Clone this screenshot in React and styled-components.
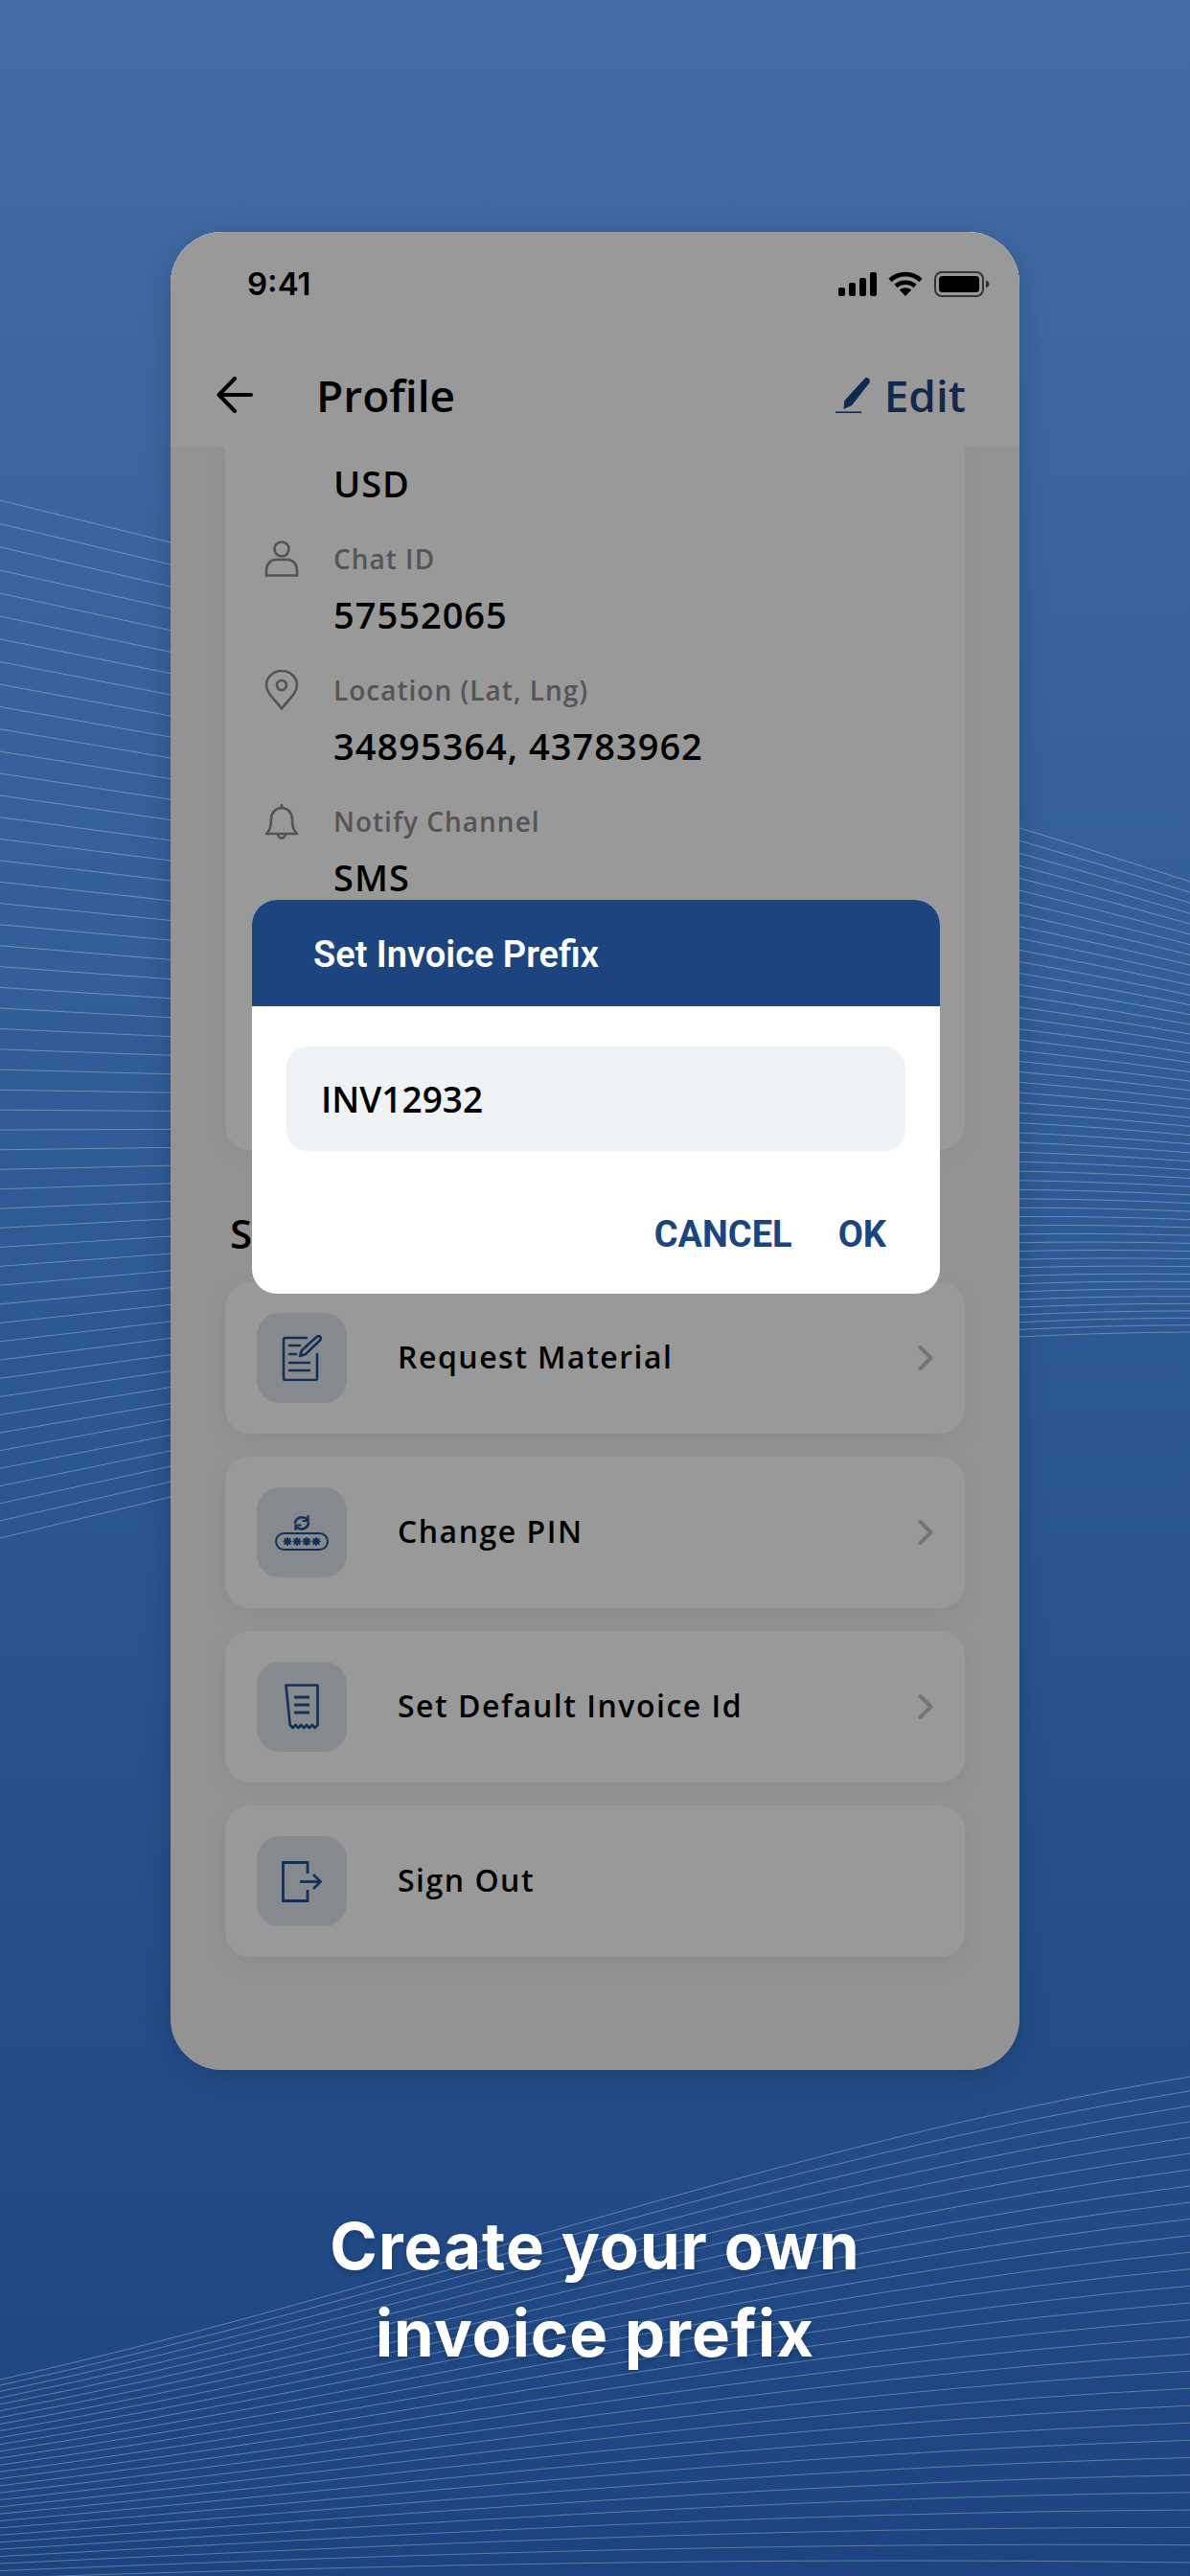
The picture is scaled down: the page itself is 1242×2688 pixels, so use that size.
import React from "react";
import styled, { createGlobalStyle } from "styled-components";

const NAVY = "#1c4580";
const ICON_BLUE = "#24508f";

const GlobalStyle = createGlobalStyle`
  html, body {
    margin: 0;
    padding: 0;
    background: #1e4680;
  }
  * {
    box-sizing: border-box;
  }
`;

// background line bands, each line is interpolated between the edges of its band
const lerp = (a, b, t) => a + (b - a) * t;

const bowed = (top, bottom, bow, t) => lerp(top, bottom, t) + bow * 4 * t * (1 - t);

const backLines = Array.from({ length: 52 }, (_, i) => {
  const t = i / 51;
  const a = bowed(522, 1605, 42, t);
  const b = bowed(566, 1562, 47, t);
  const c = bowed(864, 1395, 37, t);
  const d = bowed(920, 1390, 25, t);
  return `M0 ${a} L178 ${b} L1064 ${c} Q1150 ${lerp(c, d, 0.5) - 2} 1242 ${d}`;
});

const footLines = Array.from({ length: 30 }, (_, i) => {
  const t = i / 29;
  const e = Math.pow(t, 1.05);
  return `M0 ${lerp(2483, 2690, e)} C420 ${lerp(2390, 2676, e)} 800 ${lerp(2240, 2668, e)} 1242 ${lerp(2167, 2674, e)}`;
});

const Waves = () => (
  <WaveLayer viewBox="0 0 1242 2688" fill="none" stroke="#fff" strokeWidth="1" strokeOpacity="0.3">
    {backLines.map((d) => (
      <path key={d} d={d} />
    ))}
    {footLines.map((d) => (
      <path key={d} d={d} />
    ))}
  </WaveLayer>
);

const CellIcon = () => (
  <svg width="40" height="25" viewBox="0 0 40 25" fill="#000">
    <rect x="0" y="16" width="7" height="9" rx="2" />
    <rect x="11" y="11" width="7" height="14" rx="2" />
    <rect x="22" y="6" width="7" height="19" rx="2" />
    <rect x="33" y="0" width="7" height="25" rx="2" />
  </svg>
);

const WifiIcon = () => (
  <svg width="36" height="26" viewBox="0 0 36 26" fill="none" stroke="#000" strokeWidth="4.600">
    <path d="M2 9.500C11 1 25 1 34 9.500" />
    <path d="M8 15.500C13.500 10.500 22.500 10.500 28 15.500" />
    <path d="M18 26l-6.200-6.400c3.400-3 9-3 12.400 0z" fill="#000" stroke="none" />
  </svg>
);

const BatteryIcon = () => (
  <svg width="58" height="27" viewBox="0 0 58 27">
    <rect x="1" y="1" width="50" height="25" rx="7" fill="none" stroke="#555" strokeWidth="2" />
    <rect x="5" y="5" width="42" height="17" rx="3.500" fill="#000" />
    <path d="M54 9.500c2.200.8 3.500 2.200 3.500 4s-1.300 3.200-3.500 4z" fill="#555" />
  </svg>
);

const BackArrow = () => (
  <svg width="38" height="38" viewBox="0 0 38 38" fill="none" stroke="#000" strokeWidth="4" strokeLinecap="round" strokeLinejoin="round">
    <path d="M36 19H3" />
    <path d="M19 2L2.500 19L19 36" />
  </svg>
);

const PenIcon = () => (
  <svg width="37" height="38" viewBox="0 0 37 38">
    <path d="M31 1.500c1.500-1 3.500 0 4.500 1.500.7 1.300.5 2.500-.2 3.700L17 30l-8.500 4 .8-9z" fill={NAVY} />
    <path d="M0 37.200h27" stroke={NAVY} strokeWidth="1.600" />
  </svg>
);

const PersonIcon = () => (
  <svg width="36" height="38" viewBox="0 0 36 38" fill="none" stroke="#8a8a8a" strokeWidth="2.600">
    <circle cx="18" cy="9" r="7.500" />
    <path d="M2 36.500V31c0-7 5-11 10-11h12c5 0 10 4 10 11v5.500z" />
  </svg>
);

const PinIcon = () => (
  <svg width="36" height="42" viewBox="0 0 36 42" fill="none" stroke="#8a8a8a" strokeWidth="2.600">
    <path d="M18 40.500C10 30 2 24 2 16a16 15 0 0 1 32 0c0 8-8 14-16 24.500z" />
    <circle cx="18" cy="16" r="5" />
  </svg>
);

const BellIcon = () => (
  <svg width="36" height="38" viewBox="0 0 36 38" fill="none" stroke="#8a8a8a" strokeWidth="2.600" strokeLinejoin="round">
    <path d="M18 1v4" />
    <path d="M2 32c3-3 5-6 5-15 0-7 5-12 11-12s11 5 11 12c0 9 2 12 5 15z" />
    <path d="M14 32c0 6 8 6 8 0" />
  </svg>
);

const RequestIcon = () => (
  <svg width="42" height="48" viewBox="0 0 42 48" fill="none" stroke={ICON_BLUE} strokeWidth="2.600" strokeLinecap="round" strokeLinejoin="round">
    <path d="M26 3H4a2 2 0 0 0-2 2v40a2 2 0 0 0 2 2h31a2 2 0 0 0 2-2V20" />
    <path d="M8 11h11M8 20h7M8 29h21M8 37h21" />
    <path d="M39 1l2 2-.5 2L25 20l-6 2 2-6L37 1.500z" />
  </svg>
);

const PinChangeIcon = () => (
  <svg width="56" height="37" viewBox="0 0 56 37" fill="none" stroke={ICON_BLUE} strokeWidth="2" strokeLinecap="round" strokeLinejoin="round">
    <rect x="1" y="19" width="54" height="17" rx="8.500" />
    {[13, 23, 33, 43].map((x) => (
      <path key={x} d={`M${x - 3.500} 27.500h7M${x} 24v7M${x - 2.600} 25l5.200 5M${x + 2.600} 25l-5.200 5`} />
    ))}
    <path d="M21 8a7.500 7.500 0 0 1 13-3" strokeWidth="2.600" />
    <path d="M35 8a7.500 7.500 0 0 1-13 4" strokeWidth="2.600" />
    <path d="M34.500 1v5h-5M21.500 15v-4.500h5" strokeWidth="2.200" />
  </svg>
);

const ReceiptIcon = () => (
  <svg width="36" height="48" viewBox="0 0 36 48" fill="none" stroke={ICON_BLUE} strokeWidth="2.600" strokeLinejoin="round">
    <path d="M1.500 1.500h33v41.500l-2.800 3-2.900-3-2.900 3-2.900-3-2.900 3-2.900-3-2.900 3-2.900-3-2.900 3-2.800-3z" />
    <path d="M10 14h16M10 22h16M10 30h16" strokeWidth="3" />
  </svg>
);

const SignOutIcon = () => (
  <svg width="42" height="43" viewBox="0 0 42 43" fill="none" stroke={ICON_BLUE} strokeWidth="2.800">
    <path d="M27 13V1.500H1.500v40H27V30" />
    <path d="M19 21.500h21" />
    <path d="M33 14l7.500 7.500L33 29" />
  </svg>
);

const Chevron = () => (
  <svg width="16" height="26" viewBox="0 0 16 26" fill="none" stroke="#c4c4c4" strokeWidth="4" strokeLinecap="round" strokeLinejoin="round">
    <path d="M2.500 2L13.500 13L2.500 24" />
  </svg>
);

const details = [
  { id: "chat", icon: <PersonIcon />, label: "Chat ID", value: "57552065" },
  { id: "location", icon: <PinIcon />, label: "Location (Lat, Lng)", value: "34895364, 43783962" },
  { id: "notify", icon: <BellIcon />, label: "Notify Channel", value: "SMS" },
];

const menu = [
  { id: "material", icon: <RequestIcon />, label: "Request Material", arrow: true },
  { id: "pin", icon: <PinChangeIcon />, label: "Change PIN", arrow: true },
  { id: "invoice", icon: <ReceiptIcon />, label: "Set Default Invoice Id", arrow: true },
  { id: "signout", icon: <SignOutIcon />, label: "Sign Out", arrow: false },
];

export default function App() {
  return (
    <>
      <GlobalStyle />
      <Page>
        <Waves />
        <Phone>
          <StatusBar>
            <Clock>9:41</Clock>
            <StatusIcons>
              <CellIcon />
              <WifiIcon />
              <BatteryIcon />
            </StatusIcons>
          </StatusBar>
          <Header>
            <HeaderLeft>
              <BackArrow />
              <Title>Profile</Title>
            </HeaderLeft>
            <EditLink>
              <PenIcon />
              Edit
            </EditLink>
          </Header>
          <Content>
            <DetailsCard>
              <LoneValue>USD</LoneValue>
              {details.map((row) => (
                <DetailRow key={row.id}>
                  <DetailIcon>{row.icon}</DetailIcon>
                  <DetailLabel>{row.label}</DetailLabel>
                  <DetailValue>{row.value}</DetailValue>
                </DetailRow>
              ))}
            </DetailsCard>
            <SectionTitle>Settings</SectionTitle>
            <MenuList>
              {menu.map((item) => (
                <MenuItem key={item.id}>
                  <MenuIcon>{item.icon}</MenuIcon>
                  <MenuLabel>{item.label}</MenuLabel>
                  {item.arrow && <Chevron />}
                </MenuItem>
              ))}
            </MenuList>
          </Content>
          <Scrim>
            <Dialog>
              <DialogHead>Set Invoice Prefix</DialogHead>
              <DialogBody>
                <PrefixField>INV12932</PrefixField>
                <DialogActions>
                  <DialogButton>CANCEL</DialogButton>
                  <DialogButton>OK</DialogButton>
                </DialogActions>
              </DialogBody>
            </Dialog>
          </Scrim>
        </Phone>
        <Caption>
          Create your own
          <br />
          invoice prefix
        </Caption>
      </Page>
    </>
  );
}

const Page = styled.div`
  position: relative;
  width: 1242px;
  height: 2688px;
  overflow: hidden;
  display: flex;
  flex-direction: column;
  align-items: center;
  padding-top: 242px;
  background: linear-gradient(180deg, #426ca6 0%, #2d5994 50%, #1c4480 100%);
`;

const WaveLayer = styled.svg`
  position: absolute;
  top: 0;
  left: 0;
  width: 1242px;
  height: 2688px;
`;

const Phone = styled.div`
  position: relative;
  width: 886px;
  height: 1918px;
  flex: none;
  overflow: hidden;
  border-radius: 54px;
  background: #f5f5f5;
  box-shadow: 0 6px 30px rgba(0, 0, 0, 0.18);
  font-family: "Open Sans", sans-serif;
  color: #000;
`;

const StatusBar = styled.div`
  height: 108px;
  padding: 0 31px 0 80px;
  display: flex;
  align-items: center;
  justify-content: space-between;
  background: #fff;
`;

const Clock = styled.span`
  font-family: Inter, sans-serif;
  font-size: 33px;
  font-weight: 600;
`;

const StatusIcons = styled.div`
  display: flex;
  align-items: center;
  gap: 12px;
`;

const Header = styled.div`
  position: relative;
  z-index: 1;
  height: 116px;
  padding: 8px 56px 0 48px;
  display: flex;
  align-items: center;
  justify-content: space-between;
  background: #fff;
`;

const HeaderLeft = styled.div`
  display: flex;
  align-items: center;
  gap: 66px;
`;

const Title = styled.span`
  font-size: 46px;
  font-weight: 600;
`;

const EditLink = styled.span`
  display: flex;
  align-items: center;
  gap: 14px;
  font-size: 46px;
  font-weight: 600;
  color: ${NAVY};
`;

const Content = styled.div`
  padding: 0 57px 0 57px;
`;

const DetailsCard = styled.div`
  padding: 14px 42px 261px 41px;
  display: flex;
  flex-direction: column;
  gap: 35px;
  background: #fff;
  border-radius: 0 0 26px 26px;
  box-shadow: 0 4px 24px rgba(0, 0, 0, 0.04);
`;

const DetailRow = styled.div`
  display: grid;
  grid-template-columns: 36px 1fr;
  column-gap: 36px;
  row-gap: 14px;
  align-items: center;
`;

const DetailIcon = styled.div`
  display: flex;
  height: 40px;
  align-items: center;
`;

const DetailLabel = styled.span`
  font-size: 28px;
  line-height: 40px;
  font-weight: 600;
  letter-spacing: 1px;
  color: #8e8e8e;
`;

const DetailValue = styled.span`
  grid-column: 2;
  font-size: 38px;
  line-height: 48px;
  font-weight: 600;
  letter-spacing: 1px;
`;

const LoneValue = styled(DetailValue)`
  padding-left: 72px;
`;

const SectionTitle = styled.h2`
  margin: 59px 0 23px 5px;
  font-size: 42px;
  line-height: 56px;
  font-weight: 600;
`;

const MenuList = styled.div`
  display: flex;
  flex-direction: column;
  gap: 24px;
`;

const MenuItem = styled.div`
  height: 158px;
  padding: 0 33px 0 33px;
  display: flex;
  align-items: center;
  background: #fff;
  border-radius: 26px;
  box-shadow: 0 8px 24px rgba(0, 0, 0, 0.05);
`;

const MenuIcon = styled.div`
  width: 94px;
  height: 94px;
  flex: none;
  display: flex;
  align-items: center;
  justify-content: center;
  border-radius: 24px;
  background: #e0e4ec;
`;

const MenuLabel = styled.span`
  flex: 1;
  margin-left: 53px;
  padding-bottom: 3px;
  font-size: 32px;
  font-weight: 600;
  letter-spacing: 1.500px;
`;

const Scrim = styled.div`
  position: absolute;
  inset: 0;
  z-index: 2;
  padding: 697px 0 0 2px;
  display: flex;
  flex-direction: column;
  align-items: center;
  background: rgba(0, 0, 0, 0.4);
`;

const Dialog = styled.div`
  width: 718px;
  height: 411px;
  overflow: hidden;
  border-radius: 26px;
  background: #fff;
`;

const DialogHead = styled.div`
  height: 111px;
  padding: 2px 0 0 64px;
  display: flex;
  align-items: center;
  background: ${NAVY};
  color: #fff;
  font-family: Roboto, sans-serif;
  font-size: 38px;
  font-weight: 600;
`;

const DialogBody = styled.div`
  padding: 42px 36px 0;
`;

const PrefixField = styled.div`
  height: 109px;
  padding-left: 36px;
  display: flex;
  align-items: center;
  border-radius: 22px;
  background: #eff3f6;
  font-size: 37px;
  font-weight: 600;
`;

const DialogActions = styled.div`
  margin-top: 59px;
  padding-right: 20px;
  display: flex;
  justify-content: flex-end;
  gap: 48px;
`;

const DialogButton = styled.span`
  font-family: Roboto, sans-serif;
  font-size: 38px;
  line-height: 56px;
  font-weight: 700;
  color: ${NAVY};
`;

const Caption = styled.div`
  position: relative;
  margin-top: 138px;
  text-align: center;
  font-family: Inter, sans-serif;
  font-size: 67px;
  line-height: 91px;
  font-weight: 700;
  letter-spacing: 1px;
  color: #fff;
  text-shadow: 0 3px 6px rgba(0, 0, 0, 0.2);
`;
